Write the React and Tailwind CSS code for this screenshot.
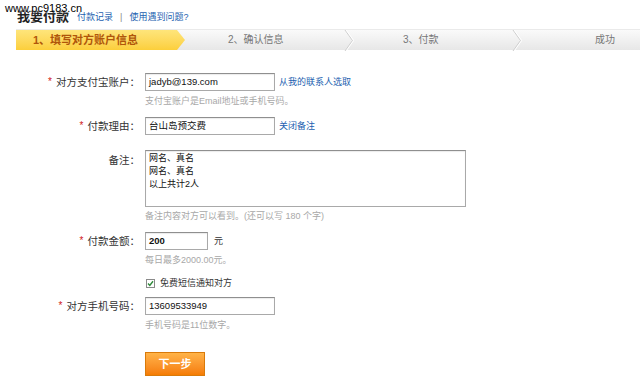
import React from "react";

const F = "font-['Liberation_Sans','Noto_Sans_CJK_SC',sans-serif]";

function Chevron() {
  return (
    <svg width="10" height="21" viewBox="0 0 10 21" className="shrink-0">
      <polyline points="1,0 8.5,10.5 1,21" fill="none" stroke="#cfcfcf" strokeWidth="1" />
      <polyline points="2.2,0 9.7,10.5 2.2,21" fill="none" stroke="#ffffff" strokeWidth="1" />
    </svg>
  );
}

function Label({ star, children }) {
  return (
    <div className="w-[140px] shrink-0 flex justify-end items-center text-[10.5px] text-[#333] leading-none">
      {star && <span className="text-[#d01818] mr-[4px] text-[10px]">*</span>}
      <span>{children}：</span>
    </div>
  );
}

function Hint({ children, className = "" }) {
  return (
    <div className={"pl-[145px] h-[12px] flex items-center text-[9px] text-[#a8a8a8] leading-none " + className}>
      {children}
    </div>
  );
}

function Input({ w, value, bold }) {
  return (
    <div
      className={
        "h-[18px] border border-[#a9a9a9] border-t-[#8f8f8f] bg-white flex items-center pl-[3px] text-[9.5px] text-[#111] leading-none shadow-[inset_0_1px_1px_rgba(0,0,0,0.08)] " +
        (bold ? "font-bold " : "")
      }
      style={{ width: w }}
    >
      {value}
    </div>
  );
}

export default function App() {
  return (
    <div className={"relative w-[640px] h-[388px] bg-white overflow-hidden " + F}>
      {/* watermark overlay */}
      <div className="absolute left-[5px] top-[3px] text-[11px] leading-none text-black [text-shadow:0_0_2px_#fff,0_0_2px_#fff] z-10 font-['Liberation_Sans',sans-serif]">
        www.pc9183.cn
      </div>

      {/* header */}
      <div className="pl-[17px] pt-[8px] flex items-end h-[23px]">
        <span className="text-[13px] font-bold text-[#222] leading-none">我要付款</span>
        <span className="ml-[8px] text-[9px] text-[#1c5fb0] leading-none mb-[1px]">付款记录</span>
        <span className="mx-[7px] text-[9px] text-[#888] leading-none mb-[1px]">|</span>
        <span className="text-[9px] text-[#1c5fb0] leading-none mb-[1px]">使用遇到问题?</span>
      </div>

      {/* steps */}
      <div className="mt-[6px] ml-[16px] h-[21px] flex bg-gradient-to-b from-[#fafafa] to-[#e7e7e7] border-t border-[#eaeaea]">
        <div className="w-[169px] shrink-0 bg-gradient-to-b from-[#fee57a] to-[#fccf3a] [clip-path:polygon(0_0,161px_0,169px_50%,161px_100%,0_100%)] flex items-center pl-[17px] text-[11px] font-bold text-[#b0560a] leading-none">
          1、填写对方账户信息
        </div>
        <div className="w-[159px] shrink-0 flex items-center pl-[43px] text-[10px] text-[#777] leading-none">2、确认信息</div>
        <Chevron />
        <div className="w-[158px] shrink-0 flex items-center pl-[49px] text-[10px] text-[#777] leading-none">3、付款</div>
        <Chevron />
        <div className="flex-1 flex items-center pl-[73px] text-[10px] text-[#777] leading-none">成功</div>
      </div>

      {/* form */}
      <div className="mt-[23px]">
        <div className="flex items-center gap-[5px]">
          <Label star>对方支付宝账户</Label>
          <Input w={130} value="jadyb@139.com" />
          <span className="ml-[-1px] text-[9px] text-[#1c5fb0] leading-none">从我的联系人选取</span>
        </div>
        <Hint className="mt-[4px]">支付宝账户是Email地址或手机号码。</Hint>

        <div className="mt-[10px] flex items-center gap-[5px]">
          <Label star>付款理由</Label>
          <Input w={130} value="台山岛预交费" />
          <span className="ml-[-1px] text-[9px] text-[#1c5fb0] leading-none">关闭备注</span>
        </div>

        <div className="mt-[15px] flex items-start gap-[5px]">
          <div className="w-[140px] shrink-0 flex justify-end pt-[5px] text-[10.5px] text-[#333] leading-none">备注：</div>
          <div className="w-[321px] h-[57px] border border-[#a9a9a9] border-t-[#8f8f8f] pl-[3px] pt-[1px] text-[9px] leading-[13px] text-[#111] shadow-[inset_0_1px_1px_rgba(0,0,0,0.08)]">
            <div>网名、真名</div>
            <div>网名、真名</div>
            <div>以上共计2人</div>
          </div>
        </div>
        <Hint className="mt-[3px]">备注内容对方可以看到。(还可以写 180 个字)</Hint>

        <div className="mt-[10px] flex items-center gap-[5px]">
          <Label star>付款金额</Label>
          <Input w={63} value="200" bold />
          <span className="ml-[1px] text-[9px] text-[#333] leading-none">元</span>
        </div>
        <Hint className="mt-[4px]">每日最多2000.00元。</Hint>

        <div className="mt-[11px] h-[12px] pl-[146px] flex items-center">
          <div className="w-[9px] h-[9px] border border-[#8a8a8a] bg-white flex items-center justify-center">
            <svg width="7" height="7" viewBox="0 0 7 7">
              <polyline points="1,3.5 2.8,5.4 6,1.3" fill="none" stroke="#2f8a3a" strokeWidth="1.4" />
            </svg>
          </div>
          <span className="ml-[5px] text-[9px] text-[#333] leading-none">免费短信通知对方</span>
        </div>

        <div className="mt-[8px] flex items-center gap-[5px]">
          <Label star>对方手机号码</Label>
          <Input w={130} value="13609533949" />
        </div>
        <Hint className="mt-[4px]">手机号码是11位数字。</Hint>

        <div className="mt-[21px] pl-[145px]">
          <div className="w-[60px] h-[24px] border border-[#d97a0a] bg-gradient-to-b from-[#ffb347] to-[#f57c00] flex items-center justify-center text-[11px] font-bold text-white leading-none">
            下一步
          </div>
        </div>
      </div>
    </div>
  );
}
